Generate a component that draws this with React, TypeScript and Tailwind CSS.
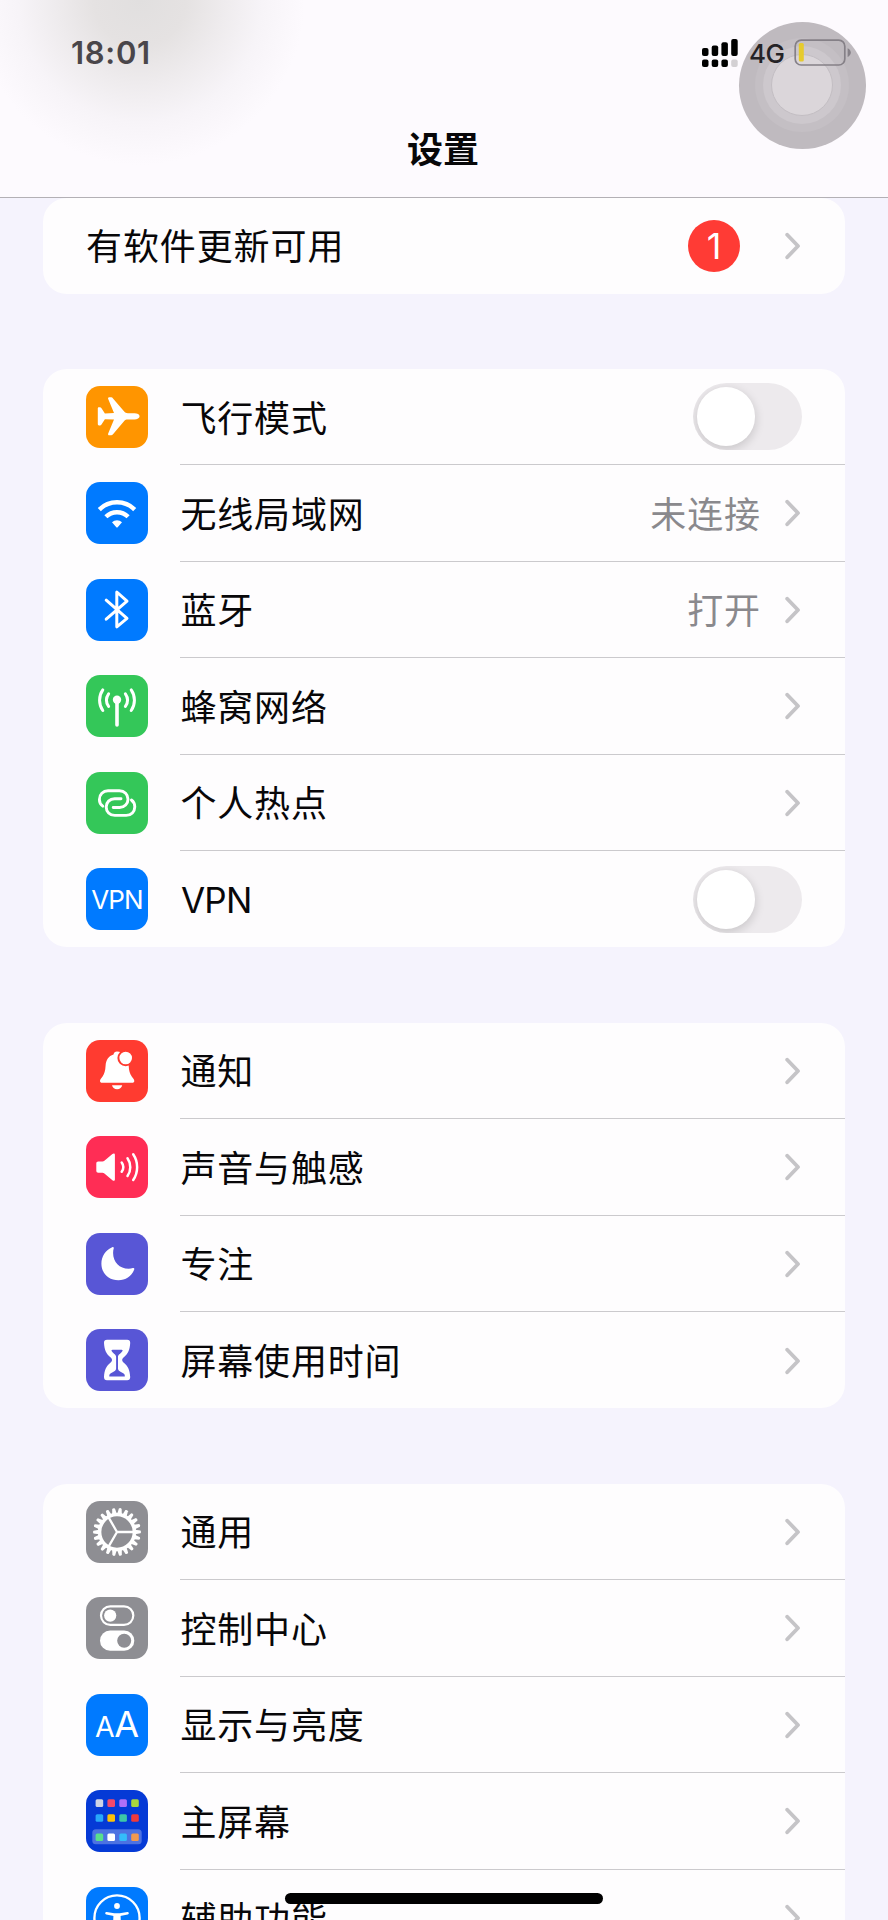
import type { ReactNode } from "react";

const CJK = "font-['Inter','Noto_Sans_CJK_SC',sans-serif]";

function Tile({ color, children }: { color: string; children?: ReactNode }) {
  return (
    <div className={`h-[62px] w-[62px] shrink-0 overflow-hidden rounded-[14px] ${color}`}>
      <svg viewBox="0 0 62 62" className="block h-full w-full" fill="none" strokeLinecap="round" strokeLinejoin="round">
        {children}
      </svg>
    </div>
  );
}

const Plane = () => (
  <Tile color="bg-[#ff9500]">
    <path
      fill="#fff"
      d="M53.6 30.3c0 1.9-2.300 3.100-5.200 3.100h-6.600c-1.600 0-2.600.4-3.600 1.600L27 48.200c-.7.8-1.300 1.100-2.200 1.100h-1.600c-1 0-1.400-.8-1-1.800L28 33.600l-9.100-.4-3.400 5.200c-.4.7-.9 1-1.700 1h-.8c-.8 0-1.200-.5-1.200-1.300V22.500c0-.8.4-1.300 1.200-1.300h.8c.8 0 1.300.3 1.700 1l3.400 5.200 9.100-.4-5.800-13.900c-.4-1 0-1.800 1-1.800h1.600c.9 0 1.500.3 2.200 1.100l11.200 13.200c1 1.200 2 1.600 3.600 1.600h6.600c2.900 0 5.200 1.200 5.200 3.100Z"
    />
  </Tile>
);

const Wifi = () => (
  <Tile color="bg-[#007aff]">
    <g stroke="#fff" strokeWidth="4.400" strokeLinecap="butt">
      <path d="M13.300 27.600A25 25 0 0 1 48.700 27.600" />
      <path d="M19.900 34.800A15.800 15.800 0 0 1 42.100 34.800" />
    </g>
    <path fill="#fff" d="M26 40.200a7.600 7.600 0 0 1 10 0l-4.300 5c-.4.500-1 .5-1.400 0Z" />
  </Tile>
);

const Bluetooth = () => (
  <Tile color="bg-[#007aff]">
    <path stroke="#fff" strokeWidth="3" d="M20.200 21.200 41 39.300 30.800 47.800V13L41 22.200 20.200 40.200" />
  </Tile>
);

const Cellular = () => (
  <Tile color="bg-[#34c759]">
    <circle cx="31" cy="24.800" r="4.200" fill="#fff" />
    <path stroke="#fff" strokeWidth="3.600" d="M31 25v25" />
    <g stroke="#fff" strokeWidth="3">
      <path d="M22.600 18.800a11 11 0 0 0 0 12.600M39.400 18.800a11 11 0 0 1 0 12.600" />
      <path d="M16.800 14.900a18 18 0 0 0 0 20.600M45.200 14.900a18 18 0 0 1 0 20.600" />
    </g>
  </Tile>
);

const LINK = "M16.8 34.2C14.4 32.4 13.4 30 13.4 27.4 13.4 22.6 17 18.8 22 18.8H33.4C38.5 18.8 42 22.6 42 27.2 42 31.8 38.5 35.5 33.6 35.5H27.2";

const Hotspot = () => (
  <Tile color="bg-[#34c759]">
    <g stroke="#fff" strokeWidth="2.900">
      <path d={LINK} />
      <path d={LINK} transform="rotate(180 31.1 31.1)" />
    </g>
  </Tile>
);

const Vpn = () => (
  <div className="flex h-[62px] w-[62px] shrink-0 items-center justify-center rounded-[14px] bg-[#007aff] pt-px font-['Inter',sans-serif] text-[26px] tracking-[-0.9px] text-white">
    VPN
  </div>
);

const Bell = () => (
  <Tile color="bg-[#ff3b30]">
    <path
      fill="#fff"
      d="M31 11.6c-2 0-3.1 1.2-3.5 2.8-5 1.6-7.5 5.4-7.9 11.2-.3 5.4-1.2 8.4-3.2 11.1-1.4 1.9-2.4 3-2.4 4.2 0 1.1.8 1.8 2.1 1.8h30.1c1.3 0 2.1-.7 2.1-1.8 0-1.2-1-2.3-2.4-4.2-2-2.7-3-5.700-3.200-11.100-.6-8-5.700-14-11.700-14Z"
    />
    <path fill="#fff" d="M26 45.300h10.200c-.4 2.300-2.300 4-5.100 4s-4.700-1.700-5.100-4Z" />
    <circle cx="39.700" cy="18" r="7.300" fill="#fff" stroke="#ff3b30" strokeWidth="2" />
  </Tile>
);

const Speaker = () => (
  <Tile color="bg-[#ff2d55]">
    <path
      fill="#fff"
      d="M10.300 27.500c0-1.300.7-2 2-2h4.200c.8 0 1.300-.2 1.900-.7l8-6.800c1.200-1 2.500-.6 2.500.9v24.500c0 1.500-1.300 1.900-2.500.9l-8-6.900c-.6-.5-1.100-.7-1.900-.7h-4.200c-1.300 0-2-.7-2-2Z"
    />
    <g stroke="#fff" strokeWidth="2.500">
      <path d="M35.700 26.500a8 8 0 0 1 0 9.300" />
      <path d="M41.500 22.300a15.500 15.500 0 0 1 0 17.700" />
      <path d="M47.200 18.300a23 23 0 0 1 0 25.700" />
    </g>
  </Tile>
);

const Moon = () => (
  <Tile color="bg-[#5856d6]">
    <path
      fill="#fff"
      d="M26.200 14.300c1.100-.5 1.900.1 1.500 1.300-.4 1.300-.6 2.800-.6 4.400 0 9.200 6.400 15.700 15.600 15.700 1.500 0 2.900-.2 4.100-.6 1.200-.4 1.900.3 1.400 1.500-2.500 6.500-8.500 10.700-15.800 10.700-9.700 0-17-7.200-17-16.600 0-7.300 4.200-13.700 10.800-16.400Z"
    />
  </Tile>
);

const Hourglass = () => (
  <Tile color="bg-[#5856d6]">
    <path
      fill="#fff"
      d="M21 10.700h20.200c2 0 3.100 1.200 3 3.200-.4 7-2.300 11-6.100 14-1.300 1-1.900 1.800-1.900 3s.6 2 1.900 3c3.800 3 5.700 7.100 6.100 14.100.1 2-1 3.300-3 3.300H21c-2 0-3.100-1.300-3-3.300.4-7 2.300-11.100 6.100-14.100 1.300-1 1.900-1.800 1.900-3s-.6-2-1.900-3c-3.800-3-5.700-7-6.100-14-.1-2 1-3.200 3-3.200Z"
    />
    <path
      fill="#5856d6"
      d="M26.600 20.700h9c1.100 0 1.300.8.7 1.600-2 2.800-4.300 3.200-4.300 6v11.200c0 2.300 1.900 3.100 5.200 4.700 1.100.6 1.600 1.300 1.600 2.500v.9H23.300v-.9c0-1.200.5-1.900 1.600-2.500 3.300-1.600 5.200-2.400 5.200-4.700V28.300c0-2.800-2.300-3.200-4.300-6-.6-.8-.3-1.600.8-1.600Z"
    />
  </Tile>
);

const Gear = () => (
  <Tile color="bg-[#8e8e93]">
    {Array.from({ length: 22 }, (_, i) => (
      <path key={i} fill="#fff" d="M49 28.700 54.500 29.500Q55.700 31 54.500 32.300L49 33.300Z" transform={`rotate(${(i * 360) / 22} 31 31)`} />
    ))}
    <circle cx="31" cy="31" r="17.400" stroke="#fff" strokeWidth="3.500" />
    <path stroke="#fff" strokeWidth="2.300" d="M31 31h16M31 31 23 17.100M31 31 23 44.900" />
  </Tile>
);

const Control = () => (
  <Tile color="bg-[#8e8e93]">
    <rect x="15" y="9.300" width="32.300" height="18.600" rx="9.300" stroke="#fff" strokeWidth="2.200" />
    <circle cx="24.200" cy="18.600" r="6.100" fill="#fff" />
    <rect x="14" y="33.600" width="34.300" height="20.200" rx="10.100" fill="#fff" />
    <circle cx="38.200" cy="43.700" r="7" fill="#8e8e93" />
  </Tile>
);

const Display = () => (
  <div className="flex h-[62px] w-[62px] shrink-0 items-baseline justify-center rounded-[14px] bg-[#007aff] font-['Inter',sans-serif] text-white">
    <span className="text-[28.500px] leading-[61px] tracking-[-0.5px]">A</span>
    <span className="text-[36px] leading-[61px]">A</span>
  </div>
);

const DOTS: [number, number, string][] = [
  [9.6, 9.300, "#cdd3e6"], [21.400, 9.300, "#f2496b"], [33.300, 9.300, "#b070f8"], [45.200, 9.300, "#a8d63e"],
  [9.600, 24.200, "#28a8fa"], [21.400, 24.200, "#fcc20a"], [33.300, 24.200, "#3dc8a8"], [45.200, 24.200, "#f03a3a"],
  [9.600, 43.500, "#58e08c"], [21.400, 43.500, "#ffffff"], [33.300, 43.500, "#34bcfa"], [45.200, 43.500, "#f29a50"],
];

const HomeScreen = () => (
  <Tile color="bg-[#053ad6]">
    <rect x="6.300" y="39.300" width="49.400" height="15" rx="3.500" fill="#4c72e2" />
    {DOTS.map(([x, y, fill]) => (
      <rect key={`${x}-${y}`} x={x} y={y} width="7.600" height="7.600" rx="1.500" fill={fill} />
    ))}
  </Tile>
);

const Accessibility = () => (
  <Tile color="bg-[#007aff]">
    <circle cx="31" cy="31" r="22.600" stroke="#fff" strokeWidth="2.400" />
    <circle cx="31" cy="19" r="2.900" fill="#fff" />
    <path stroke="#fff" strokeWidth="2.600" d="M20.500 26.300 28 27.600h6l7.500-1.300" />
    <path fill="#fff" d="M27.500 27h7l.4 9 2.600 9.500-2.600.8L31 37.500l-3.900 8.800-2.600-.8 2.600-9.500Z" />
  </Tile>
);

const Chevron = () => (
  <svg viewBox="0 0 17 28" className="h-[28px] w-[17px] shrink-0" fill="none">
    <path d="M2.200 2.700 13 14 2.200 25.300" stroke="#c5c4c7" strokeWidth="3.800" strokeLinecap="round" strokeLinejoin="round" />
  </svg>
);

const Toggle = () => (
  <div className="flex h-[67px] w-[109px] items-center overflow-hidden rounded-full bg-[#edeaed] pl-[4px]">
    <div className="h-[59px] w-[58px] rounded-full bg-white shadow-[0_3px_10px_1px_rgba(0,0,0,0.14)]" />
  </div>
);

type Item = { icon: ReactNode; label: string; value?: string; toggle?: boolean };

function Row({ item, last }: { item: Item; last: boolean }) {
  return (
    <div className="flex h-[96.450px] items-center pl-[43px]">
      {item.icon}
      <div className={`ml-[32px] flex h-full flex-1 items-center justify-between pr-[43px] ${last ? "" : "border-b border-[#cbcacd]"}`}>
        <span className={item.label === "VPN" ? "pl-px pt-[3px] text-[35px] tracking-[-0.8px]" : "pl-[0.500px] pt-[4px] text-[36px] tracking-[0.8px]"}>
          {item.label}
        </span>
        {item.toggle ? (
          <Toggle />
        ) : (
          <div className="flex items-center gap-[24px] pt-px">
            {item.value && <span className="pt-[3px] text-[36px] tracking-[0.9px] text-[#8a898d]">{item.value}</span>}
            <Chevron />
          </div>
        )}
      </div>
    </div>
  );
}

const GROUPS: Item[][] = [
  [
    { icon: <Plane />, label: "飞行模式", toggle: true },
    { icon: <Wifi />, label: "无线局域网", value: "未连接" },
    { icon: <Bluetooth />, label: "蓝牙", value: "打开" },
    { icon: <Cellular />, label: "蜂窝网络" },
    { icon: <Hotspot />, label: "个人热点" },
    { icon: <Vpn />, label: "VPN", toggle: true },
  ],
  [
    { icon: <Bell />, label: "通知" },
    { icon: <Speaker />, label: "声音与触感" },
    { icon: <Moon />, label: "专注" },
    { icon: <Hourglass />, label: "屏幕使用时间" },
  ],
  [
    { icon: <Gear />, label: "通用" },
    { icon: <Control />, label: "控制中心" },
    { icon: <Display />, label: "显示与亮度" },
    { icon: <HomeScreen />, label: "主屏幕" },
    { icon: <Accessibility />, label: "辅助功能" },
  ],
];

function AssistiveTouch() {
  return (
    <div className="absolute left-[738.500px] top-[21.500px] flex h-[127px] w-[127px] items-center justify-center rounded-full bg-[#bfbabf]">
      <div className="flex h-[94px] w-[94px] items-center justify-center rounded-full bg-[#c4bfc4]">
        <div className="flex h-[78px] w-[78px] items-center justify-center rounded-full bg-[#cdc8cd]">
          <div className="h-[62px] w-[62px] rounded-full border border-[#c3bec3] bg-[#dbd6da]" />
        </div>
      </div>
    </div>
  );
}

function StatusIcons() {
  return (
    <div className="relative flex h-[30px] items-center">
      <svg viewBox="0 0 36 28" className="h-[28px] w-[36px]" fill="#000">
        <rect x="0" y="9" width="6.500" height="8" rx="2" />
        <rect x="9.700" y="6.500" width="6.500" height="10.500" rx="2" />
        <rect x="19.400" y="3.300" width="6.500" height="13.700" rx="2" />
        <rect x="29.200" y="0" width="6.500" height="17" rx="2" />
        <rect x="0" y="20.500" width="6.500" height="7.500" rx="2" />
        <rect x="9.700" y="20.500" width="6.500" height="7.500" rx="2" />
        <rect x="19.400" y="20.500" width="6.500" height="7.500" rx="2" />
        <rect x="29.200" y="20.500" width="6.500" height="7.500" rx="2" fill="#d3d0d3" />
      </svg>
      <span className="ml-[11px] w-[45px] pt-[2px] text-[26px] font-medium leading-[30px] tracking-[-0.6px] text-[#252326]">4G</span>
      <svg viewBox="0 0 58 28" className="h-[28px] w-[58px]" fill="none">
        <rect x="1.200" y="1.200" width="49.600" height="24.800" rx="6" stroke="#858087" strokeWidth="1.700" />
        <rect x="4.800" y="4" width="5" height="18.500" rx="1.500" fill="#e6cb2e" />
        <path d="M53.600 9.200c2 .8 3.200 2.500 3.200 4.400s-1.200 3.600-3.200 4.400Z" fill="#858087" />
      </svg>
    </div>
  );
}

export default function App() {
  return (
    <div className={`relative flex h-[1920px] w-[888px] flex-col overflow-hidden bg-[#f5f3fd] text-[#080709] ${CJK}`}>
      <header className="relative flex h-[198px] shrink-0 flex-col border-b-[1.500px] border-[#b3b0b5] bg-[#fdfafe] bg-[radial-gradient(ellipse_165px_165px_at_140px_0px,#e1dfdf_0%,#e5e2e2_28%,#eeebed_50%,#f7f4f8_74%,#fdfafe_100%)]">
        <AssistiveTouch />
        <div className="flex h-[106px] items-center justify-between pl-[71px] pr-[36px]">
          <span className="text-[31px] font-semibold leading-[40px] tracking-[0.7px] text-[#4a464a]">18:01</span>
          <StatusIcons />
        </div>
        <h1 className="h-[90px] pr-[2px] text-center text-[36px] font-bold leading-[88px]">设置</h1>
      </header>

      <main className="flex flex-col gap-[75.300px] px-[43px]">
        <section className="flex h-[95.500px] items-center rounded-[24px] bg-[#fefdfe] pl-[43px] pr-[43px]">
          <span className="flex-1 pt-[2px] text-[36px] tracking-[0.9px]">有软件更新可用</span>
          <span className="mr-[45px] flex h-[52px] w-[52px] items-center justify-center rounded-full bg-[#ff3b35] text-[36px] text-white">1</span>
          <Chevron />
        </section>
        {GROUPS.map((group, g) => (
          <section key={g} className="flex flex-col rounded-[24px] bg-[#fefdfe]">
            {group.map((item, i) => (
              <Row key={item.label} item={item} last={i === group.length - 1} />
            ))}
          </section>
        ))}
      </main>

      <div className="absolute left-[285px] top-[1893px] h-[11px] w-[318px] rounded-full bg-black" />
    </div>
  );
}
